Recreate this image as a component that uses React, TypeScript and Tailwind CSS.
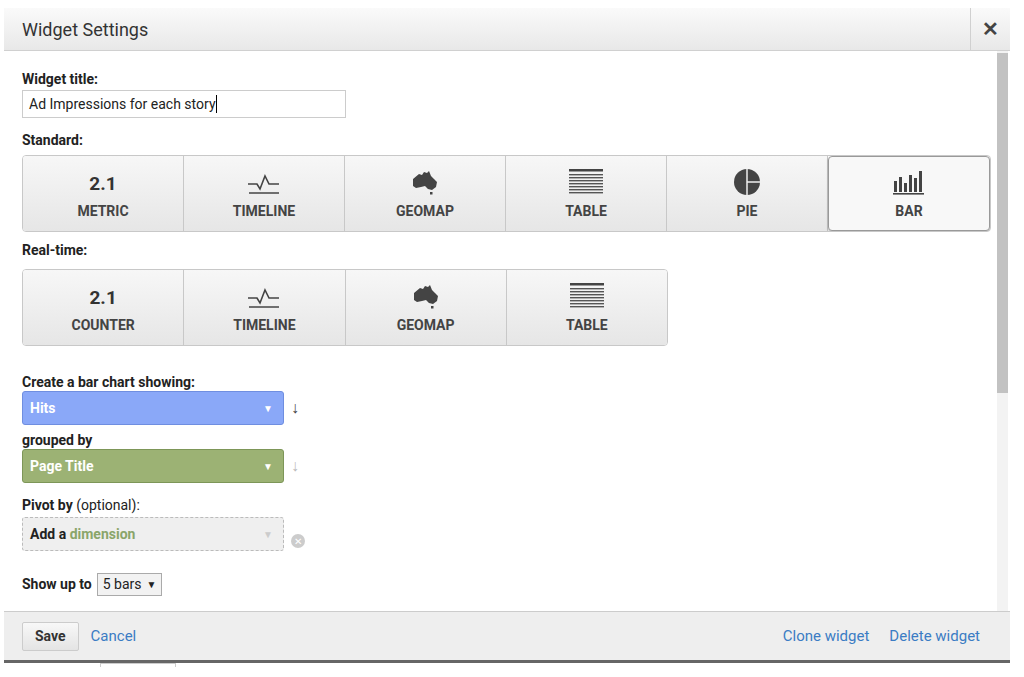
import React from "react";

const Metric = () => <div className="text-[19px] font-bold leading-[24px] text-[#333]">2.1</div>;
const Timeline = () => (
  <svg width="34" height="24" viewBox="0 0 34 24"><path d="M1 12 H10 L13 17 L18 4 L22 12 H32" fill="none" stroke="#444" strokeWidth="1.6"/><path d="M2 21 H32" stroke="#444" strokeWidth="1.6"/></svg>
);
const Geo = () => (
  <svg width="30" height="26" viewBox="0 0 30 26"><path d="M3 9 L9 4 L12 5 L14 2 L17 3 L19 1 L21 6 L24 9 L27 12 L26 17 L22 20 L18 19 L15 16 L11 17 L6 18 L3 16 Z" fill="#444"/><rect x="20" y="22" width="2.5" height="2.5" fill="#444"/></svg>
);
const Table = () => (
  <svg width="36" height="28" viewBox="0 0 36 28"><rect x="1" y="1" width="34" height="2.5" fill="#444"/>{[6,9,12,15,18,21,24].map(y=><rect key={y} x="1" y={y} width="34" height="1.4" fill="#555"/>)}</svg>
);
const Pie = () => (
  <svg width="28" height="28" viewBox="0 0 28 28"><circle cx="14" cy="14" r="13" fill="#444"/><path d="M14 1 V27 M14 14 H27" stroke="#eee" strokeWidth="1.5"/></svg>
);
const Bar = () => (
  <svg width="34" height="28" viewBox="0 0 34 28"><g fill="#444"><rect x="2" y="13" width="3" height="11"/><rect x="7" y="9" width="3" height="15"/><rect x="12" y="15" width="3" height="9"/><rect x="17" y="7" width="3" height="17"/><rect x="22" y="10" width="3" height="14"/><rect x="27" y="3" width="3" height="21"/></g><rect x="1" y="25" width="31" height="1.6" fill="#444"/></svg>
);

function Tile({ icon, label, active, last }: { icon: React.ReactNode; label: string; active?: boolean; last?: boolean }) {
  return (
    <div className={`flex-1 h-full flex flex-col items-center justify-center ${last ? "" : "border-r border-[#c8c8c8]"} ${active ? "bg-[#f8f8f8] border border-[#999] rounded shadow-[0_1px_2px_rgba(0,0,0,0.3)]" : "bg-gradient-to-b from-[#f7f7f7] to-[#e6e6e6]"}`}>
      <div className="h-[30px] flex items-end justify-center">{icon}</div>
      <div className="mt-[5px] text-[14px] font-bold text-[#444]">{label}</div>
    </div>
  );
}

export default function App() {
  return (
    <div className="w-[1024px] h-[677px] bg-white relative overflow-hidden" style={{ fontFamily: "Roboto, 'Liberation Sans', sans-serif" }}>
      <div className="ml-[4px] mt-[8px] w-[1006px] h-[655px] flex flex-col border-b-[3px] border-[#666]">
        <div className="h-[43px] flex bg-gradient-to-b from-[#fafafa] to-[#e8e8e8] border-b border-[#d0d0d0]">
          <div className="flex-1 pl-[18px] flex items-center text-[18px] text-[#333]">Widget Settings</div>
          <div className="w-[40px] border-l border-[#d0d0d0] flex items-center justify-center text-[20px] font-bold text-[#444]">✕</div>
        </div>
        <div className="flex-1 flex min-h-0">
          <div className="flex-1 pl-[18px] pt-[19px] text-[14px] text-[#222]">
            <div className="font-bold leading-[18px]">Widget title:</div>
            <div className="mt-[2px] w-[324px] h-[28px] border border-[#ccc] flex items-center pl-[6px] text-[14px] text-[#222]">Ad Impressions for each story<span className="w-px h-[18px] bg-black" /></div>
            <div className="mt-[13px] font-bold leading-[18px]">Standard:</div>
            <div className="mt-[6px] w-[969px] h-[77px] flex border border-[#c8c8c8] rounded overflow-hidden">
              <Tile icon={<Metric />} label="METRIC" />
              <Tile icon={<Timeline />} label="TIMELINE" />
              <Tile icon={<Geo />} label="GEOMAP" />
              <Tile icon={<Table />} label="TABLE" />
              <Tile icon={<Pie />} label="PIE" />
              <Tile icon={<Bar />} label="BAR" active last />
            </div>
            <div className="mt-[9px] font-bold leading-[18px]">Real-time:</div>
            <div className="mt-[10px] w-[646px] h-[77px] flex border border-[#c8c8c8] rounded overflow-hidden">
              <Tile icon={<Metric />} label="COUNTER" />
              <Tile icon={<Timeline />} label="TIMELINE" />
              <Tile icon={<Geo />} label="GEOMAP" />
              <Tile icon={<Table />} label="TABLE" last />
            </div>
            <div className="mt-[27px] font-bold leading-[18px]">Create a bar chart showing:</div>
            <div className="flex items-center">
              <div className="w-[262px] h-[34px] bg-[#8aa8f8] border border-[#6f8ee0] rounded-[3px] flex items-center justify-between px-[7px] text-white font-bold">Hits<span className="text-[10px] mr-[3px]">▼</span></div>
              <span className="ml-[7px] text-[#444] text-[16px]">↓</span>
            </div>
            <div className="font-bold leading-[18px] mt-[6px]">grouped by</div>
            <div className="flex items-center">
              <div className="w-[262px] h-[34px] bg-[#9cb274] border border-[#7d9658] rounded-[3px] flex items-center justify-between px-[7px] text-white font-bold">Page Title<span className="text-[10px] mr-[3px]">▼</span></div>
              <span className="ml-[7px] text-[#bbb] text-[16px]">↓</span>
            </div>
            <div className="leading-[18px] mt-[13px]"><b>Pivot by</b> (optional):</div>
            <div className="flex items-end mt-[3px]">
              <div className="w-[262px] h-[34px] bg-[#efefef] border border-dashed border-[#bbb] rounded-[3px] flex items-center justify-between px-[7px] font-bold">
                <span>Add a <span className="text-[#8aa56a]">dimension</span></span><span className="text-[10px] text-[#ccc] mr-[3px]">▼</span>
              </div>
              <span className="ml-[7px] mb-[3px] w-[14px] h-[14px] rounded-full bg-[#ccc] text-white text-[10px] flex items-center justify-center">✕</span>
            </div>
            <div className="flex items-center mt-[22px]">
              <b>Show up to</b>
              <div className="ml-[5px] h-[23px] px-[5px] border border-[#aaa] bg-[#f2f2f2] flex items-center text-[14px]">5 bars <span className="ml-[5px] text-[10px]">▼</span></div>
            </div>
          </div>
          <div className="w-[11px] mr-[2px] bg-[#f3f3f3] flex flex-col">
            <div className="h-[340px] mt-[2px] bg-[#c2c2c2]" />
          </div>
        </div>
        <div className="h-[49px] bg-[#eeeeee] border-t border-[#ccc] flex items-center pl-[18px] pr-[30px] text-[15px]">
          <div className="h-[29px] px-[12px] border border-[#ccc] rounded-[2px] bg-gradient-to-b from-[#f8f8f8] to-[#e4e4e4] flex items-center font-bold text-[#333] text-[14px]">Save</div>
          <span className="ml-[12px] text-[#3b7cc4]">Cancel</span>
          <span className="ml-auto text-[#3b7cc4]">Clone widget</span>
          <span className="ml-[20px] text-[#3b7cc4]">Delete widget</span>
        </div>
      </div>
      <div className="ml-[100px] w-[76px] h-[4px] border-t border-l border-r border-[#ccc]" />
    </div>
  );
}
